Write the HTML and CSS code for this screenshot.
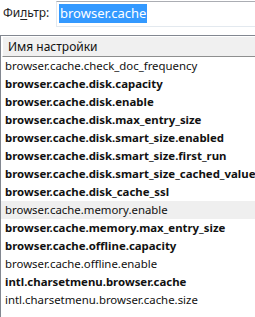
FILE: index.html
```html
<!DOCTYPE html>
<html lang="ru"><head>
  <meta name="viewport" content="width=device-width, initial-scale=1.0">
  <title>about:config</title>
  <link rel="stylesheet" href="styles.css">
</head>
<body>
  <!-- Filter row -->
  <div class="filter">
    <label class="filter-label">Фи<u>л</u>ьтр:</label>
    <div class="filter-box"><span class="sel">browser.cache</span></div>
  </div>

  <!-- Prefs list -->
  <div class="tree">
    <div class="tree-head">Имя настройки</div>
    <div class="row">browser.cache.check_doc_frequency</div>
    <div class="row b">browser.cache.disk.capacity</div>
    <div class="row b">browser.cache.disk.enable</div>
    <div class="row b">browser.cache.disk.max_entry_size</div>
    <div class="row b">browser.cache.disk.smart_size.enabled</div>
    <div class="row b">browser.cache.disk.smart_size.first_run</div>
    <div class="row b">browser.cache.disk.smart_size_cached_value</div>
    <div class="row b">browser.cache.disk_cache_ssl</div>
    <div class="row hover">browser.cache.memory.enable</div>
    <div class="row b">browser.cache.memory.max_entry_size</div>
    <div class="row b">browser.cache.offline.capacity</div>
    <div class="row">browser.cache.offline.enable</div>
    <div class="row b">intl.charsetmenu.browser.cache</div>
    <div class="row">intl.charsetmenu.browser.cache.size</div>
  </div>
</body>
</html>
```
FILE: styles.css
```css
body {
  margin: 0;
  background: #fff;
  font-family: "Noto Sans", "Open Sans", sans-serif;
  font-size: 12px;
  color: #111;
  overflow: hidden;
  width: 255px;
  height: 317px;
}
.filter {
  display: flex;
  align-items: flex-start;
  height: 35px;
}
.filter-label {
  margin: 5px 0 0 3px;
  width: 53px;
  line-height: 16px;
  color: #222;
}
.filter-label u {
  text-decoration-thickness: 1px;
  text-underline-offset: 2px;
}
.filter-box {
  margin-top: 1px;
  flex: 1;
  border: 1px solid #e3e9ef;
  border-top-color: #abadb3;
  border-right: none;
  padding: 2px 0 0 2px;
  box-sizing: border-box;
  height: 26px;
}
.sel {
  display: inline-block;
  background: #3399ff;
  color: #fff;
  height: 19px;
  line-height: 19px;
  padding: 0 1px;
  font-size: 13px;
}
.tree {
  border-left: 1px solid #828790;
  border-top: 1px solid #828790;
  height: 282px;
}
.tree-head {
  margin-left: 1px;
  height: 19px;
  line-height: 19px;
  background: #f0f0f0;
  border-top: 1px solid #fff;
  border-left: 1px solid #fff;
  border-bottom: 1px solid #8e8f8f;
  padding-left: 5px;
  font-size: 12px;
}
.row {
  height: 18px;
  line-height: 18px;
  padding-left: 4px;
  white-space: nowrap;
  font-size: 11.4px;
}
.row:first-of-type {
  margin-top: 4px;
}
.b {
  font-weight: bold;
}
.hover {
  background: #efefef;
}
```
